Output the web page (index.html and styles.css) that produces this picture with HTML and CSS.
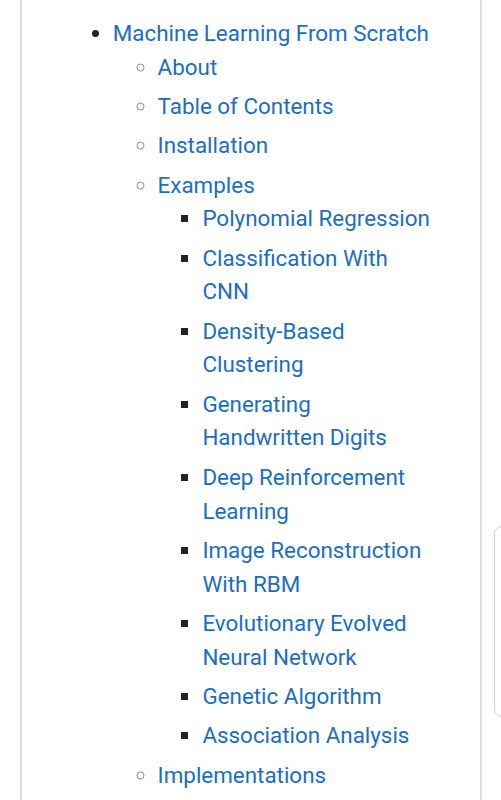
FILE: index.html
```html
<!doctype html>
<html lang="en">
<head>
    <meta charset="UTF-8">
    <meta name="viewport" content="width=device-width, initial-scale=1.0">
    <title>ML From Scratch</title>
    <link rel="stylesheet" href="styles.css">
</head>
<body>
<div class="page">
    <ul class="toc">
        <li><a href="#">Machine Learning From Scratch</a>
            <ul>
                <li><a href="#">About</a></li>
                <li><a href="#">Table of Contents</a></li>
                <li><a href="#">Installation</a></li>
                <li><a href="#">Examples</a>
                    <ul>
                        <li><a href="#">Polynomial Regression</a></li>
                        <li><a href="#">Classification With CNN</a></li>
                        <li><a href="#">Density-Based Clustering</a></li>
                        <li><a href="#">Generating Handwritten Digits</a></li>
                        <li><a href="#">Deep Reinforcement Learning</a></li>
                        <li><a href="#">Image Reconstruction With RBM</a></li>
                        <li><a href="#">Evolutionary Evolved Neural Network</a></li>
                        <li><a href="#">Genetic Algorithm</a></li>
                        <li><a href="#">Association Analysis</a></li>
                    </ul>
                </li>
                <li><a href="#">Implementations</a>
                    <ul>
                        <li><a href="#">Supervised Learning</a></li>
                        <li><a href="#">Unsupervised Learning</a></li>
                        <li><a href="#">Reinforcement Learning</a></li>
                        <li><a href="#">Deep Learning</a></li>
                    </ul>
                </li>
                <li><a href="#">Contact</a></li>
            </ul>
        </li>
    </ul>
</div>
<div class="handle"></div>
</body>
</html>
```

FILE: styles.css
```css
*{
    box-sizing: border-box;
}
body{
    margin: 0;
    padding: 0;
    background: #fff;
    font-family: Roboto, "Noto Sans", sans-serif;
    font-size: 22.4px;
    line-height: 1.505;
    color: #222;
}
.page{
    margin-left: 20px;
    width: 462px;
    padding: 17px 46px 40px 46px;
    border-left: 2px solid #dcdcdc;
    border-right: 2px solid #dcdcdc;
}
.toc{
    margin: 0;
    padding-left: 2em;
}
.toc ul{
    margin: 0;
    padding-left: 2em;
}
.toc li + li{
    margin-top: .25em;
}
.toc > li > ul > li::marker{
    color: #8a8a8a;
}
.toc ul ul > li::marker{
    color: #222;
}
.toc a{
    color: #1b6ec2;
    text-decoration: none;
}
.handle{
    position: fixed;
    left: 494px;
    top: 526px;
    width: 30px;
    height: 191px;
    border: 1px solid #cfcfcf;
    border-radius: 8px;
    background: #fff;
}
```
